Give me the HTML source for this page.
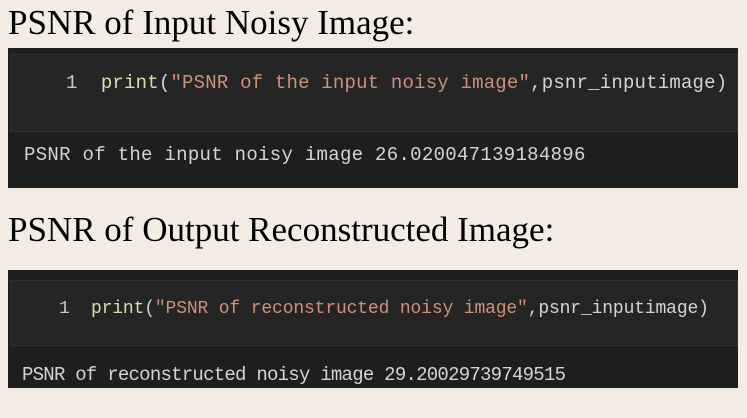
<!DOCTYPE html>
<html><head><style>
body{margin:0;width:747px;height:418px;background:#f4ebe2;position:relative;overflow:hidden;font-family:"Liberation Serif",serif}
.h{position:absolute;left:8px;font-size:35px;color:#000;white-space:nowrap;line-height:1}
.box{position:absolute;left:8px;width:730px;background:#1e1e1e}
.cell{position:absolute;left:2px;right:0;background:#252526;border:1px solid #303030}
.t{position:absolute;font-family:"Liberation Mono",monospace;white-space:nowrap;color:#d4d4d4;line-height:1}
.n{color:#c8c8c8}.f{color:#dcdcaa}.s{color:#ce9178}
</style></head><body>
<div class="h" style="top:5px">PSNR of Input Noisy Image:</div>
<div class="box" style="top:48px;height:140px">
 <div class="cell" style="top:6px;height:76px"></div>
 <div class="t" style="left:58px;top:26px;font-size:19px;letter-spacing:0.2px"><span class="n">1</span>&nbsp; <span class="f">print</span>(<span class="s">"PSNR of the input noisy image"</span>,psnr_inputimage)</div>
 <div class="t" style="left:16px;top:98px;font-size:19px;letter-spacing:0.3px">PSNR of the input noisy image 26.020047139184896</div>
</div>
<div class="h" style="top:212px">PSNR of Output Reconstructed Image:</div>
<div class="box" style="top:270px;height:118px">
 <div class="cell" style="top:10px;height:64px"></div>
 <div class="t" style="left:51px;top:30px;font-size:18px;letter-spacing:-0.15px"><span class="n">1</span>&nbsp; <span class="f">print</span>(<span class="s">"PSNR of reconstructed noisy image"</span>,psnr_inputimage)</div>
 <div class="t" style="left:14px;top:96px;font-size:19px;letter-spacing:-0.75px">PSNR of reconstructed noisy image 29.20029739749515</div>
</div>
</body></html>
